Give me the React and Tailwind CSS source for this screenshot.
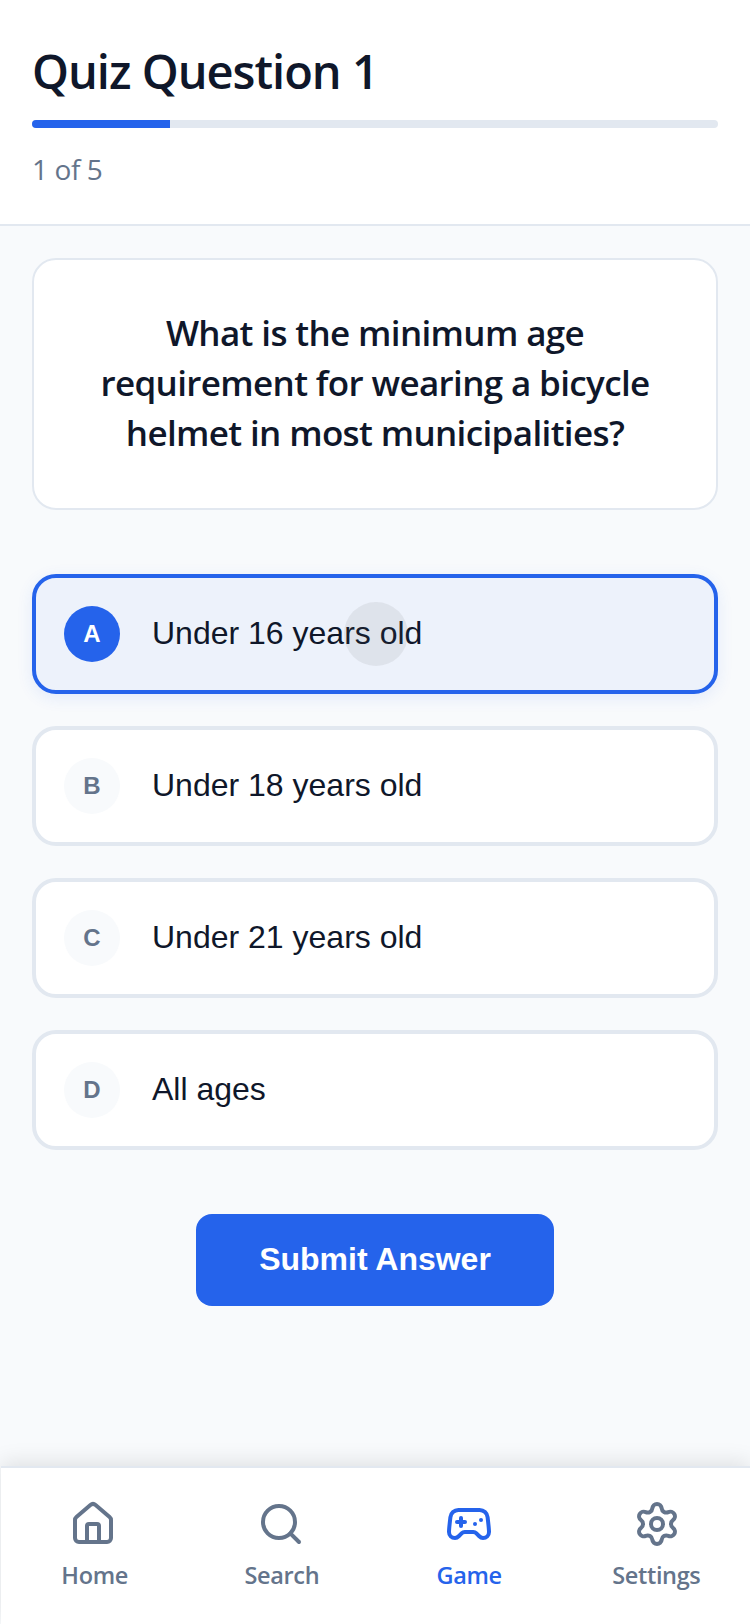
import { House, Search, Gamepad2, Settings } from "lucide-react";

const options = [
  { letter: "A", text: "Under 16 years old", selected: true },
  { letter: "B", text: "Under 18 years old" },
  { letter: "C", text: "Under 21 years old" },
  { letter: "D", text: "All ages" },
];

const tabs = [
  { label: "Home", Icon: House, nudge: "mr-[3px]" },
  { label: "Search", Icon: Search, nudge: "mr-px" },
  { label: "Game", Icon: Gamepad2, active: true },
  { label: "Settings", Icon: Settings, nudge: "ml-px" },
];

function Option({ letter, text, selected }) {
  return (
    <button
      className={
        "relative flex h-30 w-full items-center gap-8 rounded-3xl border-4 px-7 text-left " +
        (selected
          ? "border-[#2563eb] bg-[#edf2fb] shadow-[0_4px_16px_rgba(37,99,235,0.1)]"
          : "border-[#e2e8f0] bg-white")
      }
    >
      <span
        className={
          "flex size-14 items-center justify-center rounded-full text-[24px] font-bold " +
          (selected ? "bg-[#2563eb] text-white" : "bg-[#f8fafc] text-[#64748b]")
        }
      >
        {letter}
      </span>
      <span className="pb-0.5 text-[32px] leading-9 text-[#0f172a]">{text}</span>
      {selected && (
        <span className="absolute top-6 left-[308px] size-16 rounded-full bg-[rgba(100,100,100,0.1)]" />
      )}
    </button>
  );
}

export default function App() {
  return (
    <div className="flex h-[1624px] w-[750px] flex-col overflow-hidden bg-[#f8fafc] font-['Open_Sans','Noto_Sans',sans-serif] text-[#0f172a]">
      <header className="h-[226px] border-b-2 border-[#e2e8f0] bg-white px-8 pt-[42px]">
        <h1 className="mb-5 text-[47px] leading-[58px] font-semibold tracking-[-1px]">Quiz Question 1</h1>
        <div className="h-2 overflow-hidden rounded-sm bg-[#e2e8f0]">
          <div className="h-full w-[138px] bg-[#2563eb]" />
        </div>
        <p className="mt-4 text-[28px] leading-[50px] tracking-[-0.4px] text-[#64748b]">1 of 5</p>
      </header>

      <main className="flex flex-1 flex-col items-center px-8 pt-8">
        <section className="h-[252px] w-full rounded-3xl border-2 border-[#e2e8f0] bg-white pt-12 text-center text-[35px] leading-[50px] font-semibold tracking-[-0.64px]">
          What is the minimum age
          <br />
          requirement for wearing a bicycle
          <br />
          helmet in most municipalities?
        </section>
        <div className="mt-16 flex w-full flex-col gap-8 font-['Liberation_Sans',Arial,sans-serif]">
          {options.map((o) => (
            <Option key={o.letter} {...o} />
          ))}
        </div>
        <button className="mt-16 h-[92px] w-[358px] rounded-2xl bg-[#2563eb] pb-0.5 font-['Liberation_Sans',Arial,sans-serif] text-[32px] leading-9 font-bold text-white">
          Submit Answer
        </button>
      </main>

      <nav className="ml-px grid h-[158px] grid-cols-4 border-t-2 border-[#e2e8f0] bg-white pt-8 shadow-[0_-4px_20px_rgba(0,0,0,0.1)]">
        {tabs.map(({ label, Icon, active, nudge }) => (
          <a
            key={label}
            className={"flex flex-col items-center gap-[11px] " + (active ? "text-[#2563eb]" : "text-[#64748b]")}
          >
            <Icon size={48} strokeWidth={2} className={nudge} />
            <span className="text-[23.5px] leading-8 font-semibold tracking-[-0.35px]">{label}</span>
          </a>
        ))}
      </nav>
    </div>
  );
}
